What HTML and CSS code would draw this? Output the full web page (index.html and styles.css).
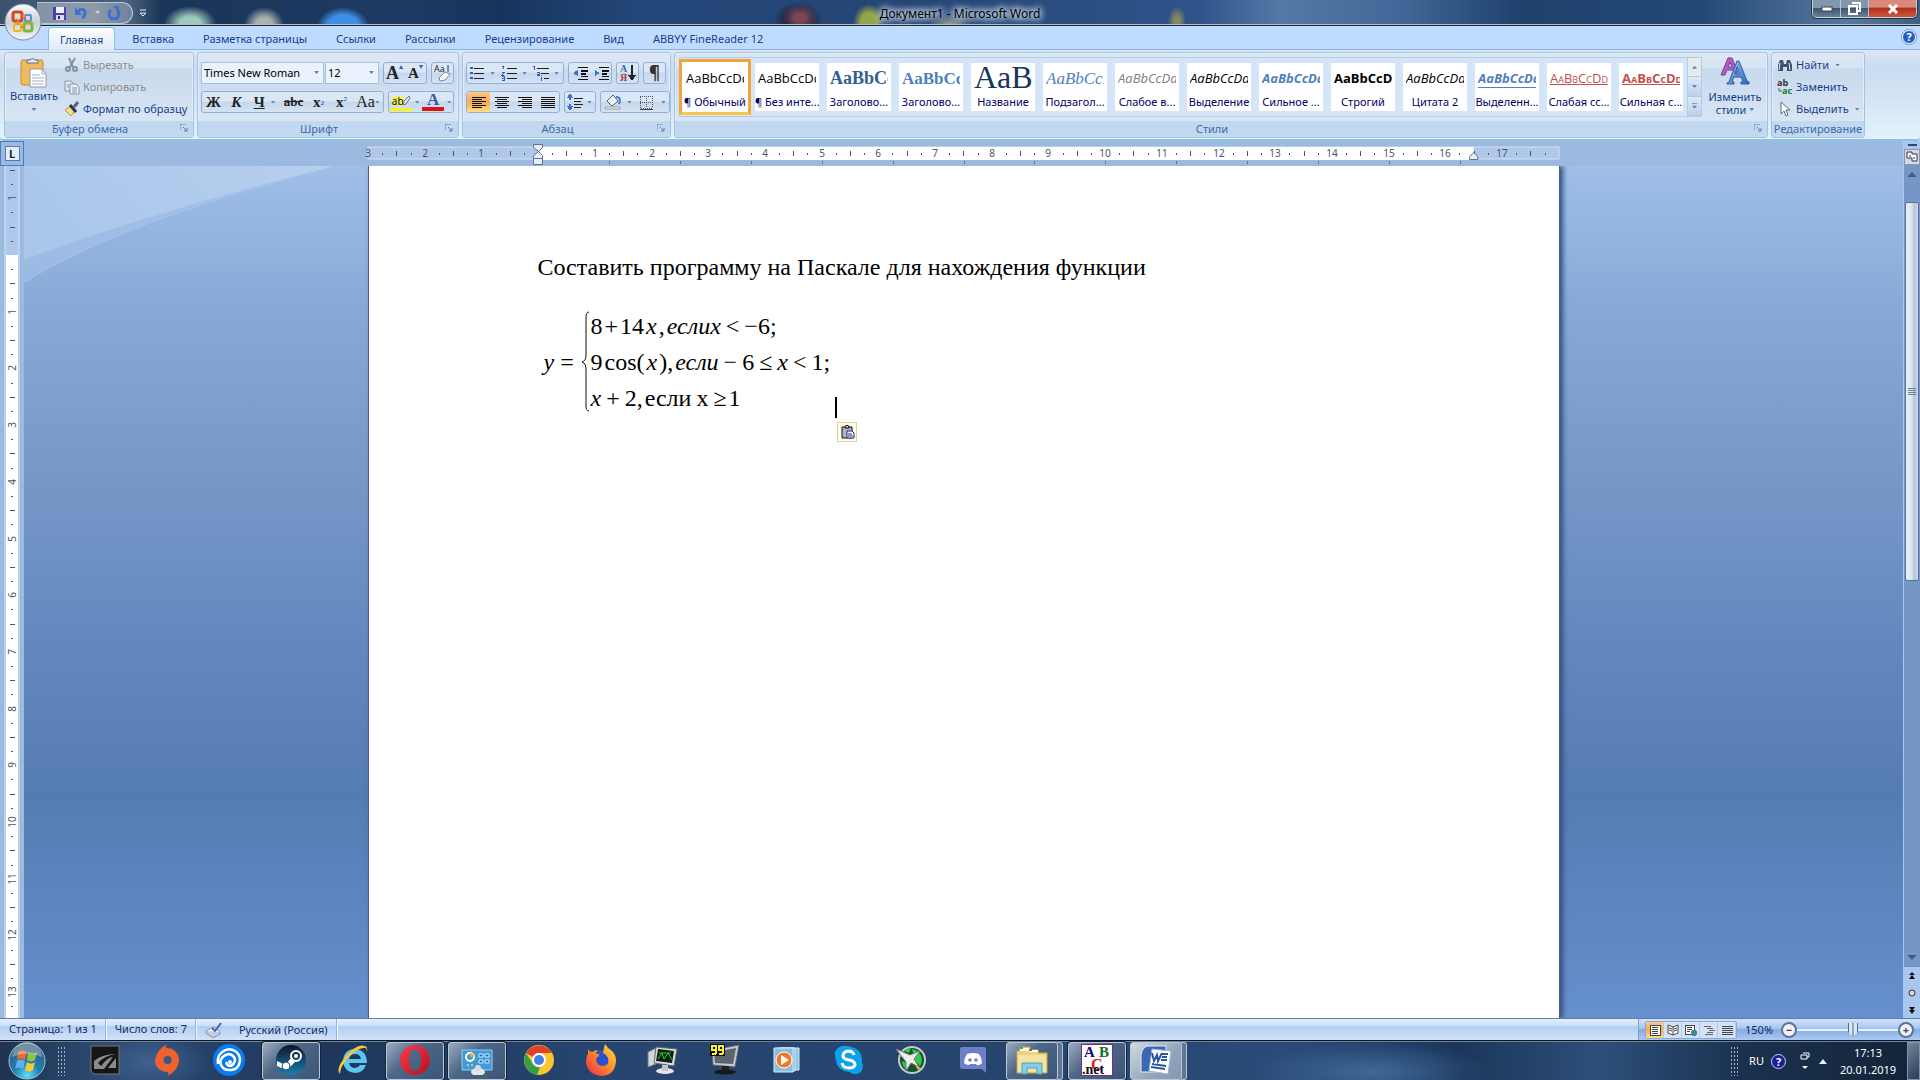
FILE: index.html
```html
<!DOCTYPE html>
<html lang="ru">
<head>
<meta charset="utf-8">
<title>Документ1 - Microsoft Word</title>
<link rel="stylesheet" href="styles.css">
</head>
<body>
<svg class="defs" aria-hidden="true">
  <defs>
    <linearGradient id="gSilver" x1="0" y1="0" x2="0" y2="1"><stop offset="0" stop-color="#fff"/><stop offset=".5" stop-color="#c9ced8"/><stop offset="1" stop-color="#f4f6fa"/></linearGradient>
    <linearGradient id="gA" x1="0" y1="0" x2="1" y2="1"><stop offset="0" stop-color="#9cc4f5"/><stop offset="1" stop-color="#2d67b8"/></linearGradient>
    <linearGradient id="gFox" x1="1" y1="0" x2="0" y2="1"><stop offset="0" stop-color="#ffe14a"/><stop offset=".45" stop-color="#ff9226"/><stop offset="1" stop-color="#e8264f"/></linearGradient>
    <radialGradient id="gOrb" cx=".5" cy=".9" r=".9"><stop offset="0" stop-color="#5fe0f5"/><stop offset=".4" stop-color="#1f7fb4"/><stop offset="1" stop-color="#3c5670"/></radialGradient>
    <linearGradient id="gSteam" x1="0" y1="0" x2="0" y2="1"><stop offset="0" stop-color="#10142b"/><stop offset="1" stop-color="#1a7fae"/></linearGradient>
    <linearGradient id="gOpera" x1="0" y1="0" x2="1" y2="1"><stop offset="0" stop-color="#ff3a4c"/><stop offset="1" stop-color="#b5101c"/></linearGradient>
    <linearGradient id="gSwoosh" x1="0" y1="0" x2="1" y2="0"><stop offset="0" stop-color="#acc8ec"/><stop offset="1" stop-color="#bdd3f0"/></linearGradient>
  </defs>
</svg>

<header class="titlebar">
  <button class="office" aria-label="Office">
    <svg width="38" height="38" viewBox="0 0 38 38"><circle cx="19" cy="19" r="18" fill="url(#gSilver)" stroke="#7b8797"/><g fill="none" stroke-width="3"><rect x="9" y="9" width="9" height="9" rx="2" stroke="#d3481d"/><rect x="21" y="12" width="6" height="6" rx="1" stroke="#4f93d6" stroke-width="2"/><rect x="10" y="21" width="7" height="7" rx="1" stroke="#f0b51c" stroke-width="2"/><rect x="20" y="20" width="8" height="8" rx="2" stroke="#82b53c"/><path d="M18 13h4M14 17v5M24 17v4M17 24h4" stroke="#e8842a" stroke-width="2"/></g></svg>
  </button>
  <div class="quick">
    <button aria-label="Сохранить"><svg width="14" height="14" viewBox="0 0 14 14"><path d="M0 1h13v13H1l-1-1z" fill="#4a41a8"/><path d="M3 1h8v6H3z" fill="#eef0fb"/><path d="M3 9h8v5H3z" fill="#d9dcf0"/><path d="M5 10h2v3H5z" fill="#332b86"/></svg></button>
    <button aria-label="Отменить"><svg width="14" height="14" viewBox="0 0 14 14"><path d="M3 6c4-4 8-3 8 1 0 2-1 4-3 5" fill="none" stroke="#3d6fd0" stroke-width="3"/><path d="M1 1v8h7z" fill="#3d6fd0"/></svg></button>
    <i class="arr light"></i>
    <button aria-label="Вернуть"><svg width="14" height="14" viewBox="0 0 14 14"><path d="M4 4a5 5 0 1 0 6 0" fill="none" stroke="#3d6fd0" stroke-width="3"/><path d="M6 0h6v6z" fill="#3d6fd0"/></svg></button>
  </div>
  <button class="quick-more" aria-label="Настройка панели"><svg width="8" height="8" viewBox="0 0 8 8"><path d="M1 1h6M1 4h6L4 7z" fill="none" stroke="#e6edf7"/></svg></button>
  <h1>Документ1 - Microsoft Word</h1>
  <div class="winbtns">
    <button aria-label="Свернуть"><svg width="12" height="6" viewBox="0 0 12 6"><rect x="1" y="1" width="10" height="4" fill="#fff" stroke="#3c4658"/></svg></button>
    <button aria-label="Восстановить"><svg width="13" height="13" viewBox="0 0 13 13"><path d="M4 1h8v8h-2M1 4h8v8H1z" fill="none" stroke="#fff" stroke-width="2"/></svg></button>
    <button class="close" aria-label="Закрыть"><svg width="12" height="10" viewBox="0 0 12 10"><path d="M2 1l8 8M10 1L2 9" stroke="#fff" stroke-width="3"/></svg></button>
  </div>
</header>

<nav class="tabs">
  <a class="active" href="#home">Главная</a><a href="#insert">Вставка</a><a href="#layout">Разметка страницы</a><a href="#refs">Ссылки</a><a href="#mail">Рассылки</a><a href="#review">Рецензирование</a><a href="#view">Вид</a><a href="#abbyy">ABBYY FineReader 12</a>
  <button class="help" aria-label="Справка">?</button>
</nav>

<section class="ribbon" id="home">
  <div class="group clip">
    <div class="tools">
      <button class="big"><svg width="28" height="31" viewBox="0 0 28 31"><rect x="1" y="3" width="22" height="25" rx="2" fill="#eebb5c" stroke="#c38d35"/><path d="M7 5V3h3a3 3 0 0 1 5 0h3v3H7z" fill="#e7e9ee" stroke="#666f80"/><path d="M10 12h12l4 5v13H10z" fill="#fff" stroke="#8a97ad"/><path d="M22 12v5h4M12 18h8M12 21h12M12 24h12M12 27h12" fill="none" stroke="#a3afc2"/></svg><span>Вставить</span><i class="arr"></i></button>
      <div class="list">
        <button class="off"><svg width="16" height="16" viewBox="0 0 16 16"><path d="M5 1l4 9M11 1L6 10" stroke="#8391a8" stroke-width="2"/><circle cx="4" cy="12" r="2" fill="none" stroke="#8391a8" stroke-width="2"/><circle cx="11" cy="12" r="2" fill="none" stroke="#8391a8" stroke-width="2"/></svg>Вырезать</button>
        <button class="off"><svg width="16" height="16" viewBox="0 0 16 16"><path d="M1 2h6l3 3v7H1z" fill="#dfe6f0" stroke="#8391a8"/><path d="M6 5h6l3 3v7H6z" fill="#eef2f8" stroke="#8391a8"/><path d="M8 9h5M8 11h5M8 13h5M3 6h2M3 8h2" stroke="#8391a8"/></svg>Копировать</button>
        <button><svg width="16" height="16" viewBox="0 0 16 16"><path d="M1 9l6-4 4 5-4 5z" fill="#f6e087" stroke="#b9973c"/><path d="M6 4l6 7" stroke="#2e3550" stroke-width="3"/><path d="M10 6l4-5" stroke="#59607a" stroke-width="3"/></svg>Формат по образцу</button>
      </div>
    </div>
    <h2>Буфер обмена<svg class="launch" width="8" height="8" viewBox="0 0 8 8"><path d="M0 6V0h6M3 3l4 4M7 4v3H4" fill="none" stroke="#5d7fae"/></svg></h2>
  </div>

  <div class="group font">
    <div class="rows">
      <div class="row">
        <div class="combos"><label class="combo wide"><select aria-label="Шрифт"><option>Times New Roman</option></select></label><label class="combo"><select aria-label="Размер"><option>12</option></select></label></div>
        <div class="bar"><button class="serif big-a" aria-label="Увеличить размер">A<sup>▴</sup></button><button class="serif" aria-label="Уменьшить размер">A<sup>▾</sup></button></div>
        <div class="bar"><button aria-label="Очистить формат"><svg width="18" height="18" viewBox="0 0 18 18"><text x="0" y="8" font-size="9" font-family="Open Sans" fill="#222">Aa</text><path d="M14 1v7" stroke="#333"/><path d="M5 14l6-6 5 2-5 6-5 1z" fill="#fff" stroke="#76839b"/></svg></button></div>
      </div>
      <div class="row">
        <div class="bar"><button class="serif">Ж</button><button class="serif ital">К</button><button class="serif under">Ч</button><i class="arr"></i><button class="serif strike">abc</button><button class="serif">x<sub>₂</sub></button><button class="serif">x<sub>²</sub></button><button class="serif aa">Aa<i class="arr"></i></button></div>
        <div class="bar"><button class="mark"><span>ab</span><svg class="pen" width="10" height="11" viewBox="0 0 10 11"><path d="M2 10l1-4 5-5 1 2-4 6z" fill="#dfe8f4" stroke="#5d718f"/></svg></button><i class="arr"></i><button class="serif color">A</button><i class="arr"></i></div>
      </div>
    </div>
    <h2>Шрифт<svg class="launch" width="8" height="8" viewBox="0 0 8 8"><path d="M0 6V0h6M3 3l4 4M7 4v3H4" fill="none" stroke="#5d7fae"/></svg></h2>
  </div>

  <div class="group para">
    <div class="rows">
      <div class="row">
        <div class="bar"><button aria-label="Маркеры"><svg width="16" height="16" viewBox="0 0 16 16"><path d="M5 3h10M5 8h10M5 13h10" stroke="#222"/><path d="M1 2h3v2H1zM1 7h3v2H1zM1 12h3v2H1z" fill="#2f5fb5"/></svg></button><i class="arr"></i><button aria-label="Нумерация"><svg width="16" height="16" viewBox="0 0 16 16"><path d="M6 3h10M6 8h10M6 13h10" stroke="#222"/><path d="M1 1h1v3M1 7h2v1l-2 2h2M1 11h2v4H1M1 13h2" fill="none" stroke="#2f5fb5"/></svg></button><i class="arr"></i><button aria-label="Многоуровневый список"><svg width="18" height="16" viewBox="0 0 18 16"><path d="M5 3h12M9 8h8M12 13h5" stroke="#222"/><path d="M1 1h1v4M5 7h2v3H5V9h2M9 12v4M9 10v1" fill="none" stroke="#2f5fb5"/></svg></button><i class="arr"></i></div>
        <div class="bar"><button aria-label="Уменьшить отступ"><svg width="16" height="16" viewBox="0 0 16 16"><path d="M6 2h10M9 5h7M9 8h5M9 11h7M6 14h10" stroke="#111"/><path d="M9 6h7M9 9h5" stroke="#111"/><path d="M6 5v6L1 8z" fill="#3b74cc"/></svg></button><button aria-label="Увеличить отступ"><svg width="16" height="16" viewBox="0 0 16 16"><path d="M6 2h10M9 5h7M9 8h5M9 11h7M6 14h10" stroke="#111"/><path d="M9 6h7M9 9h5" stroke="#111"/><path d="M2 5v6l5-3z" fill="#3b74cc"/></svg></button></div>
        <div class="bar"><button aria-label="Сортировка"><svg width="16" height="18" viewBox="0 0 16 18"><text x="0" y="8" font-size="10" font-weight="bold" font-family="Liberation Serif" fill="#3c66b4">А</text><text x="0" y="17" font-size="10" font-weight="bold" font-family="Liberation Serif" fill="#b43a3a">Я</text><path d="M12 1v13M9 11l3 4 3-4" fill="none" stroke="#222" stroke-width="2"/></svg></button></div>
        <div class="bar"><button class="pil">¶</button></div>
      </div>
      <div class="row">
        <div class="bar"><button class="on" aria-label="По левому краю"><svg width="16" height="14" viewBox="0 0 16 14"><path d="M1 2h14M1 4h10M1 6h14M1 8h10M1 10h14M1 12h10" stroke="#111"/></svg></button><button aria-label="По центру"><svg width="16" height="14" viewBox="0 0 16 14"><path d="M1 2h14M3 4h10M1 6h14M3 8h10M1 10h14M3 12h10" stroke="#111"/></svg></button><button aria-label="По правому краю"><svg width="16" height="14" viewBox="0 0 16 14"><path d="M1 2h14M5 4h10M1 6h14M5 8h10M1 10h14M5 12h10" stroke="#111"/></svg></button><button aria-label="По ширине"><svg width="16" height="14" viewBox="0 0 16 14"><path d="M1 2h14M1 4h14M1 6h14M1 8h14M1 10h14M1 12h14" stroke="#111"/></svg></button></div>
        <div class="bar"><button aria-label="Интервал"><svg width="16" height="16" viewBox="0 0 16 16"><path d="M7 4h9M7 7h7M7 10h9M7 13h7" stroke="#222"/><path d="M3 2v4M3 10v4M1 4l2-3 2 3M1 12l2 3 2-3" fill="none" stroke="#3b74cc" stroke-width="2"/></svg></button><i class="arr"></i></div>
        <div class="bar"><button aria-label="Заливка"><svg class="smooth" width="18" height="16" viewBox="0 0 18 16"><path d="M3 7l6-6 5 6-6 5z" fill="#f4f6fa" stroke="#4a5b78"/><path d="M12 3c4 0 5 3 3 7" fill="none" stroke="#4379c4" stroke-width="2"/><path d="M1 13h15v2H1z" fill="#fff" stroke="#999"/></svg></button><i class="arr"></i><button aria-label="Границы"><svg width="15" height="15" viewBox="0 0 15 15"><path d="M1 1h12v12H1zM7 1v12M1 7h12" fill="none" stroke="#556" stroke-dasharray="1 1"/><path d="M1 14h13" stroke="#444"/></svg></button><i class="arr"></i></div>
      </div>
    </div>
    <h2>Абзац<svg class="launch" width="8" height="8" viewBox="0 0 8 8"><path d="M0 6V0h6M3 3l4 4M7 4v3H4" fill="none" stroke="#5d7fae"/></svg></h2>
  </div>

  <div class="group styles">
    <div class="tools">
      <div class="gallery">
        <button class="tile sel"><b class="s-norm">AaBbCcDd</b><span>¶ Обычный</span></button>
        <button class="tile"><b class="s-norm">AaBbCcDd</b><span>¶ Без инте...</span></button>
        <button class="tile"><b class="s-h1">AaBbCc</b><span>Заголово...</span></button>
        <button class="tile"><b class="s-h2">AaBbCc</b><span>Заголово...</span></button>
        <button class="tile"><b class="s-title">AaB</b><span>Название</span></button>
        <button class="tile"><b class="s-sub">AaBbCc.</b><span>Подзагол...</span></button>
        <button class="tile"><b class="s-weak">AaBbCcDd</b><span>Слабое в...</span></button>
        <button class="tile"><b class="s-em">AaBbCcDd</b><span>Выделение</span></button>
        <button class="tile"><b class="s-strong-em">AaBbCcDd</b><span>Сильное ...</span></button>
        <button class="tile"><b class="s-strong">AaBbCcDd</b><span>Строгий</span></button>
        <button class="tile"><b class="s-em">AaBbCcDd</b><span>Цитата 2</span></button>
        <button class="tile"><b class="s-quote">AaBbCcDd</b><span>Выделенн...</span></button>
        <button class="tile"><b class="s-ref">AaBbCcDd</b><span>Слабая сс...</span></button>
        <button class="tile"><b class="s-ref bold">AaBbCcDd</b><span>Сильная с...</span></button>
        <div class="gscroll"><button class="off" aria-label="Вверх"><i class="arr up"></i></button><button aria-label="Вниз"><i class="arr"></i></button><button aria-label="Ещё"><i class="arr more"></i></button></div>
      </div>
      <button class="big change"><svg width="30" height="30" viewBox="0 0 30 30"><path fill-rule="evenodd" d="M1 18L8 1h4l6 15h-4l-1-3H7l-2 5zM8 10h4L10 5z" fill="#b35cc0" stroke="#7d3c92"/><path fill-rule="evenodd" d="M7 27v-1l2-1L17 4h2l8 20 2 1v2h-8v-2l2-1-2-4h-7l-2 4 2 1v2zM15 17h5l-3-7z" fill="url(#gA)" stroke="#2c5da6"/></svg><span>Изменить<br>стили <i class="arr"></i></span></button>
    </div>
    <h2>Стили<svg class="launch" width="8" height="8" viewBox="0 0 8 8"><path d="M0 6V0h6M3 3l4 4M7 4v3H4" fill="none" stroke="#5d7fae"/></svg></h2>
  </div>

  <div class="group edit">
    <div class="list">
      <button><svg width="16" height="14" viewBox="0 0 16 14"><path d="M1 13V7l2-5h3l1 4h2l1-4h3l2 5v6h-5V9H6v4z" fill="#3d5273"/><path d="M3 5l-1 7M12 5l1 7M4 1h2M10 1h2" stroke="#e8eef8"/></svg>Найти<i class="arr"></i></button>
      <button><svg width="16" height="16" viewBox="0 0 16 16"><text x="0" y="7" font-size="9" font-weight="bold" font-family="Open Sans" fill="#333">ab</text><text x="5" y="15" font-size="9" font-weight="bold" font-family="Open Sans" fill="#16802a">ac</text><path d="M2 9v3h3" fill="none" stroke="#3660a0"/></svg>Заменить</button>
      <button><svg width="16" height="16" viewBox="0 0 16 16"><path d="M4 1v12l3-3 2 5 2-1-2-5h4z" fill="#fff" stroke="#5b6b85"/></svg>Выделить<i class="arr"></i></button>
    </div>
    <h2>Редактирование</h2>
  </div>
</section>

<main class="work">
  <div class="corner"><button aria-label="Табуляция">L</button></div>
  <div class="hruler"><svg id="hruler" width="1192" height="24" role="img" aria-label="Линейка"></svg></div>
  <div class="vruler"><svg id="vruler" width="24" height="852" role="img" aria-label="Линейка"></svg></div>
  <div class="canvas">
    <svg class="swoosh" width="320" height="120" viewBox="0 0 320 120"><path d="M0 0h310C200 28 90 62 0 116z" fill="#b4cdef" opacity=".35"/><path d="M0 0h310C200 28 100 56 0 94z" fill="url(#gSwoosh)" opacity=".75"/><path d="M310 0C200 30 90 62 0 116" fill="none" stroke="#a9c5ea"/></svg>
    <article class="page">
      <p>Составить программу на Паскале для нахождения функции</p>
      <div class="formula">
        <span class="lhs"><i>y</i> =</span>
        <svg width="8" height="101" viewBox="0 0 8 101"><path d="M7 1Q4 1 4 6V44Q4 50 0 51Q4 52 4 57V95Q4 100 7 100" fill="none" stroke="#111"/></svg>
        <div class="cases">
          <div><span>8</span><span>+</span><span>14</span><i>x</i><span>,</span><i>еслих</i><span class="op">&lt;</span><span>−6;</span></div>
          <div><span>9</span><span>cos(</span><i>x</i><span>),</span><i>если</i><span class="op">−</span><span>6</span><span class="op">≤</span><i>x</i><span class="op">&lt;</span><span>1;</span></div>
          <div><i>x</i><span class="op">+</span><span>2,</span><span>если</span><span class="op">x</span><span>≥</span><span>1</span></div>
        </div>
        <div class="caret"><button aria-label="Параметры вставки"><svg width="14" height="16" viewBox="0 0 14 16"><path d="M1 3h10v11H1z" fill="#aeb4bd" stroke="#111"/><path d="M4 4V2h1l1-1 1 1h1v2z" fill="#f3d873" stroke="#111"/><path d="M6 7h5l2 2v5H6z" fill="#fff" stroke="#1b2a8c"/><path d="M7 10h4M7 12h5" stroke="#1b2a8c"/></svg></button></div>
      </div>
    </article>
  </div>
  <div class="scroll">
    <i class="split"></i>
    <button class="rulerbtn" aria-label="Линейка"><svg width="12" height="12" viewBox="0 0 12 12"><path d="M1 1h5v2h5v7H6V7H1z" fill="#fff" stroke="#334"/><path d="M3 5h2M8 6v2" stroke="#334"/></svg></button>
    <div class="track"><i class="arr up"></i><div class="thumb"><i></i></div><div class="rest"><i class="arr"></i></div></div>
    <button aria-label="Предыдущая"><svg width="8" height="8" viewBox="0 0 8 8"><path d="M4 0l3 3H1zM4 3l3 4H1z" fill="#111"/></svg></button>
    <button aria-label="Объект"><svg width="8" height="8" viewBox="0 0 8 8"><circle cx="4" cy="4" r="3" fill="#d8d8d8" stroke="#333"/></svg></button>
    <button aria-label="Следующая"><svg width="8" height="8" viewBox="0 0 8 8"><path d="M1 1h6L4 5zM1 4h6L4 8z" fill="#111"/></svg></button>
  </div>
</main>

<footer class="status">
  <span>Страница: 1 из 1</span><span>Число слов: 7</span>
  <span class="lang"><svg width="18" height="16" viewBox="0 0 18 16"><path d="M1 9l8-4 6 5-7 4z" fill="#fff" stroke="#8090ac"/><path d="M1 9v2l7 5 7-4v-2" fill="#c2cee2" stroke="#8090ac"/><path d="M7 6l3 3 6-8" fill="none" stroke="#3f66b4" stroke-width="2"/></svg>Русский (Россия)</span>
  <div class="view">
    <div class="modes">
      <button class="on" aria-label="Разметка"><svg width="12" height="12" viewBox="0 0 12 12"><path d="M1 1h10v10H1z" fill="#fff" stroke="#444"/><path d="M3 3h6M3 5h6M3 7h6M3 9h6" stroke="#444"/></svg></button>
      <button aria-label="Чтение"><svg class="smooth" width="12" height="12" viewBox="0 0 12 12"><path d="M1 1l5 2 5-2v8l-5 2-5-2zM6 3v8M2 4l3 1M2 6l3 1M7 5l3-1M7 7l3-1" fill="#fff" stroke="#444"/></svg></button>
      <button aria-label="Веб"><svg width="13" height="13" viewBox="0 0 13 13"><path d="M1 1h9v9H1z" fill="#fff" stroke="#444"/><path d="M3 3h5M3 5h5M3 7h3" stroke="#444"/><circle cx="10" cy="9" r="3" fill="#3a8a9c"/></svg></button>
      <button aria-label="Структура"><svg width="12" height="12" viewBox="0 0 12 12"><path d="M1 2h7M4 4h6M6 6h6M4 8h6M2 10h8" stroke="#666"/></svg></button>
      <button aria-label="Черновик"><svg width="12" height="12" viewBox="0 0 12 12"><path d="M1 2h11M1 4h11M1 6h11M1 8h11M1 10h11" stroke="#444"/></svg></button>
    </div>
    <span class="pct">150%</span>
    <button class="round" aria-label="Уменьшить">−</button>
    <input type="range" min="0" max="100" value="56" aria-label="Масштаб">
    <button class="round" aria-label="Увеличить">+</button>
  </div>
</footer>

<div class="taskbar">
  <button class="start" aria-label="Пуск"><svg width="38" height="38" viewBox="0 0 38 38"><circle cx="19" cy="19" r="18" fill="url(#gOrb)" stroke="#9fc2d8"/><path d="M10 10c3-2 6-2 9 0l-2 8c-3-2-5-2-8 0z" fill="#ee6a34"/><path d="M20 10c3 2 6 2 9 0l-2 8c-3 2-5 2-8 0z" fill="#8fc63f"/><path d="M9 19c3-2 5-2 8 0l-2 8c-3-2-5-2-8 0z" fill="#5cb2ef"/><path d="M19 20c3 2 5 2 8 0l-2 8c-3 2-5 2-8 0z" fill="#fbc92f"/><path d="M4 15a15 15 0 0 1 30 0Q19 8 4 15" fill="#fff" opacity=".3"/></svg></button>
  <i class="grip"></i>
  <div class="apps">
    <button aria-label="GeForce"><svg width="30" height="30" viewBox="0 0 30 30"><path d="M1 1h28v28H4l-3-3z" fill="#161616" stroke="#777"/><path d="M4 22V16q8-7 22-7-12 2-18 9l3 3q7-9 12-9l-9 12H4zM18 23l8-10v10z" fill="#8b8b8b"/></svg></button>
    <button aria-label="Origin"><svg width="30" height="32" viewBox="0 0 30 32"><path fill-rule="evenodd" d="M15 0q-2 3-1 4A12 12 0 0 1 27 16q0 9-11 16 1-2 0-4A12 12 0 0 1 3 17Q4 6 15 0zM15 12a4 4 0 1 0 1 8 4 4 0 0 0-1-8z" fill="#f0622d"/></svg></button>
    <button aria-label="Uplay"><svg width="32" height="32" viewBox="0 0 32 32"><circle cx="16" cy="16" r="16" fill="#0a7cf0"/><g fill="none" stroke="#fff" stroke-width="2.5"><path d="M5 20C3 9 14 2 22 7s6 18-4 19-14-9-7-14 13 2 10 7-9 2-7-1"/></g><circle cx="17" cy="18" r="2" fill="#fff"/></svg></button>
    <button class="run" aria-label="Steam"><svg width="30" height="30" viewBox="0 0 30 30"><circle cx="15" cy="15" r="15" fill="url(#gSteam)"/><circle cx="20" cy="11" r="5" fill="none" stroke="#fff" stroke-width="2"/><circle cx="20" cy="11" r="2" fill="#fff"/><path d="M1 16l8 4 7-8 3 5-6 6-3 2-9-4z" fill="#fff"/><circle cx="10" cy="21" r="4" fill="#fff" stroke="#164e74"/></svg></button>
    <button aria-label="Internet Explorer"><svg width="32" height="32" viewBox="0 0 32 32"><path fill-rule="evenodd" d="M30 19H12q1 5 6 5 3 0 5-3h6q-3 8-11 8-11-1-12-12Q7 5 18 5q12 1 12 14zM12 15h12q-1-5-6-5t-6 5z" fill="#5cc5f2"/><path d="M3 30Q-2 25 9 12T28 2q3 1 2 6 0-5-4-4Q19 5 11 14T3 30z" fill="#f5cb32"/></svg></button>
    <button class="run" aria-label="Opera"><svg width="32" height="30" viewBox="0 0 32 30"><path fill-rule="evenodd" d="M16 0a15 15 0 1 0 0 30 15 15 0 0 0 0-30zM16 4c4 0 6 5 6 11s-2 11-6 11-6-5-6-11 2-11 6-11z" fill="url(#gOpera)"/></svg></button>
    <button class="run" aria-label="Панель управления"><svg width="32" height="30" viewBox="0 0 32 30"><path d="M1 5h30v20H1z" fill="#3f9ad8" stroke="#8fd0f2"/><circle cx="9" cy="12" r="4" fill="none" stroke="#fff" stroke-width="2"/><path d="M9 8v4h4a4 4 0 0 0-4-4" fill="#f6a22b"/><path d="M18 9h4v3h-4zM24 9h4v3h-4zM18 15h4v3h-4zM24 15h4v3h-4z" fill="#1c6db2" stroke="#d7effc"/><circle cx="7" cy="20" r="1" fill="#fc9"/><circle cx="11" cy="20" r="1" fill="#fc9"/><ellipse cx="17" cy="27" rx="7" ry="4" fill="#e4e7ea"/><circle cx="17" cy="23" r="3" fill="#d8dce0"/></svg></button>
    <button aria-label="Chrome"><svg width="30" height="30" viewBox="0 0 30 30"><circle cx="15" cy="15" r="15" fill="#fbc52f"/><path d="M2 8A15 15 0 0 1 28 8H15a7 7 0 0 0-6 4z" fill="#e0412f"/><path d="M2 8l7 11a7 7 0 0 0 7 3l-3 8A15 15 0 0 1 2 8" fill="#34a046"/><circle cx="15" cy="15" r="7" fill="#fff"/><circle cx="15" cy="15" r="5" fill="#4280ec"/></svg></button>
    <button aria-label="Firefox"><svg width="32" height="32" viewBox="0 0 32 32"><circle cx="16" cy="16" r="10" fill="#2a52c8"/><path d="M3 5q2 3 4 3 3-2 6-2-2 2-2 4h3q1 2-3 4 0 8 7 8 7-1 5-8-2-4-5-5 1-6 2-9 3 5 7 7 4 4 4 10-1 14-14 15Q3 31 1 19 1 12 3 10z" fill="url(#gFox)"/></svg></button>
    <button aria-label="Монитор"><svg width="32" height="30" viewBox="0 0 32 30"><path d="M1 7l8-4v16l-8 3z" fill="#d4d7da" stroke="#777"/><path d="M9 2l21 2-3 17-20-3z" fill="#d9dcdf" stroke="#666"/><path d="M11 4l16 2-2 12-16-2z" fill="#0b2310"/><path d="M11 14l4-6 2 6 4-6 4 7M12 8h12" fill="none" stroke="#35c43f"/><ellipse cx="18" cy="26" rx="9" ry="3" fill="#e3e5e7"/><path d="M15 20h6v6h-6z" fill="#c2c6ca"/></svg></button>
    <button aria-label="Fraps"><svg width="32" height="32" viewBox="0 0 32 32"><path d="M3 6l27-5-4 22-22-2z" fill="#c5c9cd" stroke="#666"/><path d="M5 8l22-4-3 16-18-1z" fill="#5c646d"/><path d="M13 22h7v4h-7z" fill="#222"/><ellipse cx="16" cy="28" rx="11" ry="2.500" fill="#16181a"/><path d="M1 0h15v12H1z" fill="#111"/><path d="M7 10V2H3v4h4M3 10h4M14 10V2h-4v4h4M10 10h4" fill="none" stroke="#f8f03a" stroke-width="2"/></svg></button>
    <button aria-label="Media Player"><svg width="28" height="28" viewBox="0 0 28 28"><path d="M8 2h18v22H8z" fill="#8fc4e6" stroke="#d8ecf8"/><path d="M4 2h18v23H4z" fill="#6dafdd" stroke="#d8ecf8"/><path d="M1 2h19v24H1z" fill="#8abde0" stroke="#d8ecf8"/><circle cx="11" cy="14" r="8" fill="#f07a24" stroke="#fff"/><path d="M8 9v10l8-5z" fill="#fff"/></svg></button>
    <button aria-label="Skype"><svg width="30" height="30" viewBox="0 0 30 30"><path d="M8 1q5-1 9 1 11 2 11 13-1 3 1 5 0 9-8 9-4 0-5-2Q3 26 2 15-2 4 8 1z" fill="#0aa2ea"/><path d="M20 10q-1-4-6-4-5 1-5 5 0 3 6 4t6 5q-1 3-6 3-6 0-7-5" fill="none" stroke="#fff" stroke-width="3"/></svg></button>
    <button aria-label="Afterburner"><svg width="32" height="30" viewBox="0 0 32 30"><circle cx="17" cy="15" r="13" fill="#135428" stroke="#c4cacb" stroke-width="2"/><path d="M17 4a11 11 0 0 1 8 17l-5-5zM7 16l5 2-1 6q-4-3-4-8zM9 6q3-3 7-3l-2 5z" fill="#2fc94e"/><path d="M1 4l14 6 10-4-6 8 5 8-8-4-5 8v-9z" fill="#eceeee" stroke="#777"/><path d="M20 20l6 3-3 2z" fill="#f4b13a"/></svg></button>
    <button aria-label="Discord"><svg width="28" height="28" viewBox="0 0 28 28"><path d="M3 1h22q2 0 2 2v24l-4-4H3q-2 0-2-2V3q0-2 2-2z" fill="#6d7fc9"/><path d="M8 8q6-2 12 0 3 4 3 9-3 3-5 2l-1-1H11l-1 1q-3 0-5-2 0-5 3-9z" fill="#fff"/><circle cx="11" cy="14" r="1.800" fill="#6d7fc9"/><circle cx="17" cy="14" r="1.800" fill="#6d7fc9"/></svg></button>
    <button class="run stack" aria-label="Проводник"><svg width="34" height="30" viewBox="0 0 34 30"><path d="M2 6h3V2h10v3h8v3h9v20H2z" fill="#ecd67c" stroke="#c9ac4a"/><path d="M5 3h9v3H5zM14 5h9v2h-9z" fill="#fff"/><path d="M5 2h3v2H5z" fill="#3a3"/><path d="M14 4h3v2h-3z" fill="#c43"/><path d="M3 10h28v17H3z" fill="#f4e49d"/><path d="M7 29V18h20v11h-5v-6H12v6z" fill="#86cdea" stroke="#4f9fc8"/></svg></button>
    <button class="run" aria-label="PascalABC.NET"><svg width="32" height="32" viewBox="0 0 32 32"><path d="M0 0h32v32H0z" fill="#fff" stroke="#7a2a8a" stroke-width="2"/><g font-family="Liberation Serif" font-weight="bold"><text x="3" y="13" font-size="15" fill="#10107a">A</text><text x="18" y="13" font-size="15" fill="#0f7420">B</text><text x="10" y="26" font-size="16" fill="#e01818">C</text><text x="1" y="30" font-size="14" fill="#111">.net</text></g></svg></button>
    <button class="run active stack" aria-label="Word"><svg width="32" height="30" viewBox="0 0 32 30"><path d="M8 1h18v26H1V10q1-8 7-9z" fill="#3c68b2" stroke="#e2ebf8"/><path d="M12 4l19 2-3 23-19-3z" fill="#fff" stroke="#9db4d8"/><path d="M12 8l2 8 3-6 1 6 4-8M22 9h6M22 12h5M21 15h6M12 19l14 2M11 22l14 2" fill="none" stroke="#2b559f" stroke-width="2"/></svg></button>
  </div>
  <div class="tray">
    <i class="grip"></i><span class="ru">RU</span>
    <span class="q">?</span>
    <svg width="10" height="18" viewBox="0 0 10 18"><path d="M3 1h6v4H7M1 3h6v4H1z" fill="none" stroke="#fff"/><path d="M2 14h6l-3 3z" fill="#fff"/></svg>
    <svg width="8" height="5" viewBox="0 0 8 5"><path d="M0 5h8L4 0z" fill="#e8eef6"/></svg>
    <time>17:13<br>20.01.2019</time>
    <button class="desk" aria-label="Рабочий стол"></button>
  </div>
</div>
<script src="rulers.js"></script>
</body>
</html>
```

FILE: styles.css
```css
* { box-sizing: border-box; }
body {
  margin: 0; height: 100vh; display: flex; flex-direction: column; overflow: hidden;
  font: 11px/16px "Noto Sans", "Open Sans", sans-serif; color: #15428b; background: #bfdbff;
}
button { border: 0; padding: 0; margin: 0; background: none; font: inherit; color: inherit; display: inline-flex; align-items: center; justify-content: center; }
svg { display: block; flex: none; }
.defs { position: absolute; width: 0; height: 0; }
.arr { flex: none; display: inline-block; width: 5px; height: 3px; background: #5f83b8; clip-path: polygon(0 0, 100% 0, 50% 100%); }
.arr.up { clip-path: polygon(0 100%, 100% 100%, 50% 0); }
.arr.light { background: #c6d6ee; }

.titlebar {
  position: relative; flex: none; height: 26px; display: flex; align-items: center; border-bottom: 1px solid #16263a;
  box-shadow: inset 0 -1px #b9c0bd;
  background:
    radial-gradient(ellipse 26px 18px at 190px 24px, #9fc9bd 40%, transparent),
    radial-gradient(ellipse 20px 18px at 264px 25px, #a9b5ac 40%, transparent),
    radial-gradient(ellipse 26px 20px at 343px 27px, #3f8fe6 60%, transparent),
    radial-gradient(ellipse 18px 14px at 800px 18px, #7c4658 30%, transparent),
    radial-gradient(ellipse 24px 18px at 798px 20px, #1c2438 50%, transparent),
    radial-gradient(ellipse 16px 18px at 869px 22px, #94a44a 50%, transparent),
    radial-gradient(ellipse 22px 12px at 950px 26px, #8c9c84 20%, transparent),
    radial-gradient(ellipse 9px 16px at 1177px 22px, #86895f 30%, transparent),
    linear-gradient(90deg, #3c526e 0, #4a627f 130px, #1b3558 160px, #1d3a62 400px, #16345c 500px, #24487a 640px, #254575 900px, #2f548a 1200px, #5479a8 1280px, #416898 1400px, #1f416e 1520px, #244977 1700px, #56799f 1850px, #41607f);
}
.office { position: absolute; left: 4px; top: 3px; z-index: 2; }
.quick { margin-left: 37px; width: 96px; height: 22px; padding-left: 16px; display: flex; align-items: center; gap: 7px; border: 1px solid #b9c6d6; border-left: 0; border-radius: 0 11px 11px 0; background: linear-gradient(90deg, #8593a8, #8e9ba6 60%, #6f819b); }
.quick-more { margin-left: 6px; width: 8px; }
.titlebar h1 { position: absolute; left: 0; right: 0; top: 6px; margin: 0; text-align: center; font-size: 12px; font-weight: 400; color: #000; text-shadow: 0 0 6px #dfe8f4, 0 0 8px #c9d6e8, 0 0 10px #c9d6e8, 0 0 6px #dfe8f4; }
.winbtns { margin: 0 3px 0 auto; align-self: flex-start; z-index: 1; display: flex; height: 18px; border: 1px solid #c3cfdd; border-top: 0; border-radius: 0 0 5px 5px; overflow: hidden; box-shadow: 0 0 0 1px #22344c; }
.winbtns button { width: 28px; border-right: 1px solid #b9c5d4; background: linear-gradient(#8496ac 45%, #3f566f 50%, #6a8097); }
.winbtns .close { width: 47px; border: 0; background: linear-gradient(#d98a7a 40%, #b2301c 50%, #d0583a); }

.tabs { flex: none; height: 24px; padding-left: 48px; display: flex; align-items: flex-end; background: #bfdbff; border-bottom: 1px solid #8db2e3; position: relative; }
.tabs a { height: 22px; padding: 4px 15px 0; margin-right: -1px; color: #15428b; text-decoration: none; white-space: nowrap; }
.tabs .active { margin: 0 2px -1px 0; height: 23px; padding: 4px 11px 0; background: linear-gradient(#fdfeff, #dfe9f6); border: 1px solid #7fc4ea; border-bottom: 0; border-radius: 4px 4px 0 0; }
.help { margin: 0 4px 5px auto; width: 14px; height: 14px; border-radius: 50%; background: #2560c8; border: 1px solid #fff; outline: 1px solid #7a9ccc; color: #fff; font-weight: 700; font-size: 11px; }

.ribbon { flex: none; height: 91px; padding: 2px 55px 1px 4px; display: flex; gap: 3px; background: linear-gradient(#dbe7f6, #c9dcf1 20%, #d5e4f4 55%, #e3f3fd); border-bottom: 2px solid #8cc4e6; border-radius: 0 0 4px 4px; }
.group { display: flex; flex-direction: column; border: 1px solid #a5c3e0; border-radius: 3px; box-shadow: 0 0 0 1px #e4eefa inset; background: linear-gradient(#dde8f5 0, #d5e3f2 15px, #c8d9ed 16px, #d8e5f4 68px); overflow: hidden; }
.group h2 { margin: auto 0 0; height: 16px; flex: none; position: relative; font-size: 11px; line-height: 16px; font-weight: 400; text-align: center; color: #3e6aaa; background: #c1d8f0; white-space: nowrap; }
.clip h2, .font h2, .para h2, .styles h2 { padding-right: 18px; }
.launch { position: absolute; right: 5px; top: 3px; }
.clip { width: 190px; }
.font { width: 262px; }
.para { width: 209px; }
.styles { flex: 1; min-width: 0; }
.edit { width: 94px; }
.tools { display: flex; }
.big { flex: none; flex-direction: column; justify-content: flex-start; width: 58px; padding-top: 4px; white-space: nowrap; }
.big .arr { margin-top: 4px; }
.list { display: flex; flex-direction: column; align-items: flex-start; padding: 1px 0 0 1px; }
.list button { height: 22px; gap: 3px; white-space: nowrap; }
.list .off { color: #8d8d8d; }
.edit .list { padding-left: 5px; }
.edit .arr { margin-left: 3px; }

.rows { display: flex; flex-direction: column; gap: 7px; padding: 9px 0 0 3px; }
.row { display: flex; gap: 4px; }
.combos { display: flex; gap: 1px; }
.combo { position: relative; width: 54px; height: 22px; }
.combo.wide { width: 123px; }
.combo select { appearance: none; width: 100%; height: 22px; border: 1px solid #abc1de; border-radius: 0; background: #eaf2fb; font: inherit; color: #000; padding: 0 2px; }
.combo::after { content: ""; position: absolute; right: 5px; top: 9px; width: 5px; height: 3px; background: #5f83b8; clip-path: polygon(0 0, 100% 0, 50% 100%); }
.bar { height: 22px; display: flex; align-items: center; border: 1px solid #8fb0d8; border-radius: 3px; background: linear-gradient(#dce7f5 45%, #c5d7ed 50%, #d5e3f3); overflow: hidden; }
.para .bar svg, .modes svg { shape-rendering: crispEdges; }
.para .bar .smooth, .modes .smooth { shape-rendering: auto; }
.bar button { height: 20px; width: 23px; position: relative; }
.font .row .bar:last-child button { width: 22px; }
.font .row:first-child .bar button { width: 21px; }
.font .row:last-child .bar:first-child { width: 183px; }
.font .row:last-child .bar:last-child { width: 66px; justify-content: space-around; }
.serif { font-family: "Liberation Serif", serif; font-size: 15px; font-weight: 700; color: #222; }
.serif.big-a { font-size: 18px; }
.serif sup { font: 8px/8px "DejaVu Sans", sans-serif; color: #2f5fb5; align-self: flex-start; }
.serif sub { font: 10px/10px "DejaVu Sans", sans-serif; color: #2f5fb5; }
.bar .ital { font-style: italic; }
.bar .under { text-decoration: underline; }
.bar .strike { text-decoration: line-through; font-size: 13px; width: 28px; margin-left: 4px; }
.bar .aa { width: 30px; margin-left: auto; font-weight: 400; font-size: 16px; }
.mark { font-size: 10px; color: #111; }
.mark span { background: #f4ef6a; line-height: 10px; align-self: flex-start; margin-top: 2px; }
.mark { border-bottom: 3px solid #f8f410; }
.mark .pen { margin-left: -3px; }
.bar .mark { width: 16px; height: 17px; border-bottom: 3px solid #f8f410; }
.bar .color { width: 16px; height: 17px; font-size: 17px; line-height: 14px; color: #2e5ca8; border-bottom: 4px solid #e01212; }
.para .arr { margin: 0 3px; }
.para .row:first-child .bar:first-child { width: 98px; }
.para .row:first-child .bar:first-child .arr { margin: 0 4px 0 3px; }
.para .row:first-child .bar:first-child button { width: 21px; }
.para .row:first-child .bar:nth-child(2) button { width: 21px; }
.para .row:first-child .bar:nth-child(n+3) button { width: 21px; }
.para .row:last-child .bar:nth-child(2) button { width: 19px; }
.bar .on, .modes .on { background: linear-gradient(#fbc98c, #f9a84f 50%, #fee08a); }
.pil { font-size: 17px; font-weight: 700; color: #333; }

.gallery { display: flex; flex: 1; min-width: 0; height: 60px; margin: 4px 3px 0 4px; border: 1px solid #b3cbe6; border-left: 0; background: #d4e5f7; }
.tile { flex: none; width: 72px; height: 56px; margin-top: 1px; border: 4px solid transparent; flex-direction: column; justify-content: flex-end; background: #fff; background-clip: padding-box; color: #000066; overflow: hidden; white-space: nowrap; }
.tile b { width: 58px; height: 29px; line-height: 29px; overflow: hidden; text-align: left; font-weight: 400; color: #000; }
.tile span { line-height: 18px; max-width: 64px; }
.tile.sel { border: 3px solid #efa53a; border-bottom-color: #f5c84c; padding: 1px; }
.s-norm, .s-weak, .s-em, .s-strong-em, .s-strong, .s-quote, .s-ref { font-family: "Open Sans", sans-serif; font-size: 13px; }
.tile .s-h1 { font: 700 18px/29px "Liberation Serif", serif; color: #365f91; }
.tile .s-h2 { font: 700 17px/29px "Liberation Serif", serif; color: #4f81bd; }
.tile .s-title { font: 32px/26px "Liberation Serif", serif; color: #17365d; }
.tile .s-sub { font: italic 17px/29px "Liberation Serif", serif; color: #4f81bd; }
.tile .s-weak { font-style: italic; color: #808080; }
.tile .s-em { font-style: italic; }
.tile .s-strong-em { font-style: italic; font-weight: 700; color: #4f81bd; }
.tile .s-strong { font-weight: 700; }
.tile .s-quote { font-style: italic; font-weight: 700; color: #4f81bd; text-decoration: underline; text-underline-offset: 4px; }
.tile .s-ref { font-variant: small-caps; color: #c0504d; text-decoration: underline; }
.tile .bold { font-weight: 700; }
.gscroll { width: 14px; margin-left: auto; display: flex; flex-direction: column; border-left: 1px solid #b3cbe6; }
.gscroll button { flex: 1; background: linear-gradient(#dce8f6, #bcd2ec); border-bottom: 1px solid #b3cbe6; }
.gscroll .off { background: #e6e9ee; }
.gscroll .more { height: 6px; clip-path: polygon(0 0, 100% 0, 100% 1px, 0 1px, 0 3px, 100% 3px, 50% 100%, 0 3px); }
.change { width: 60px; line-height: 13px; margin-right: 2px; }
.change span { margin-top: 3px; }
.change .arr { margin: 0 0 3px; }

.work { flex: 1; min-height: 0; display: grid; grid-template-columns: 24px 1fr 17px; grid-template-rows: 25px 1fr; background: #9cb9e0; }
.corner { display: flex; border: 1px solid #4d7cc0; }
.corner button { margin: auto; width: 15px; height: 15px; border: 1px solid #4d7cc0; background: #e4eefb; font-size: 11px; font-weight: 700; line-height: 10px; color: #123; }
.hruler { display: flex; justify-content: center; overflow: hidden; }
.hruler svg { overflow: visible; }
.vruler { grid-row: 2; overflow: hidden; }
.canvas { grid-area: 2 / 2; position: relative; display: flex; justify-content: center; overflow: hidden; background: linear-gradient(#9fbfe9, #89a9d8 16%, #7b9ccb 32%, #6286bd 58%, #557cb2 74%, #6690ce); }
.swoosh { position: absolute; left: 0; top: 0; }
.page { position: relative; width: 1192px; background: #fff; border: 1px solid #4c5f7c; border-width: 0 1px; box-shadow: 3px 0 5px #33507e; padding: 85px 169px 0 169px; color: #000; font: 24px/32px "Liberation Serif", serif; }
.page p { margin: 0; white-space: nowrap; }
.formula { margin-top: 27px; padding-left: 6px; height: 103px; display: flex; align-items: center; white-space: nowrap; }
.formula svg { margin: 0 1px 0 4px; }
.lhs { width: 34px; }
.cases { width: 244px; display: flex; flex-direction: column; align-items: flex-start; }
.cases div { display: flex; height: 36px; align-items: center; gap: 2px; }
.op { margin: 0 3px; }
.caret { position: relative; align-self: flex-end; width: 2px; height: 21px; margin-bottom: -5px; background: #000; }
.caret button { position: absolute; left: 2px; top: 25px; width: 20px; height: 20px; border: 1px solid #e6cf95; background: #fdfaf0; }

.scroll { grid-area: 1 / 3 / 3 / 4; display: flex; flex-direction: column; align-items: center; background: #a9c6ef; border-left: 1px solid #a6c8f2; padding-top: 3px; }
.scroll button { height: 17px; width: 16px; }
.split { width: 9px; height: 2px; margin-bottom: 3px; background: #31486c; }
.scroll .rulerbtn { height: 16px; border: 1px solid #8c96ab; background: #d2dae8; }
.track { flex: 1; width: 16px; display: flex; flex-direction: column; align-items: center; background: #7596c6; }
.track .arr { width: 9px; height: 5px; margin: 7px 0; background: #3e5a86; }
.thumb { width: 14px; margin-top: 18px; flex: 377; border: 1px solid #5a7399; border-radius: 2px; display: flex; align-items: center; justify-content: center; background: linear-gradient(90deg, #e9eff7, #dbe5f0 45%, #b5c5da 70%, #cbd8e8); }
.thumb i { width: 8px; height: 7px; background: repeating-linear-gradient(#6c7f99 0 1px, transparent 1px 2px); }
.rest { flex: 386; display: flex; align-items: flex-end; }

.status { flex: none; height: 23px; border-top: 1px solid #5f7ea8; display: flex; background: linear-gradient(#e3eefb, #cbdff8 30%, #b2cff3 34%, #d6e3f8); color: #152b63; }
.status > span { line-height: 20px; padding: 0 8px 0 9px; border-right: 1px solid #97b5dc; box-shadow: 1px 0 #f2f7fd; white-space: nowrap; }
.status > .lang { display: flex; align-items: center; gap: 16px; }
.view { margin-left: auto; width: 282px; padding: 0 6px; display: flex; align-items: center; border-left: 1px solid #7f9fcb; background: linear-gradient(#d3e3fa, #a9c8f2 40%, #85ade4 50%, #b1cdf3); }
.modes { display: flex; width: 92px; height: 18px; border: 1px solid #8aa9d4; border-radius: 2px; background: #d3e2f5; }
.modes button { flex: 1; border-right: 1px solid #b5cbe7; }
.pct { margin: 0 8px; width: 28px; white-space: nowrap; }
.round { width: 16px; height: 16px; flex: none; border: 2px solid #5f7494; border-radius: 50%; background: #f0f4fa; font-weight: 700; line-height: 12px; color: #444; }
.view input { appearance: none; flex: 1; min-width: 0; margin: 0; height: 16px; background: linear-gradient(#e8f1fc, #e8f1fc) center / 100% 2px no-repeat; }
.view input::-webkit-slider-thumb { appearance: none; width: 10px; height: 14px; background: linear-gradient(90deg, #51688c 0 1px, #dbe6f5 1px 4px, #8fa3c0 4px 6px, #dbe6f5 6px 9px, #51688c 9px); clip-path: polygon(0 0, 100% 0, 100% 65%, 50% 100%, 0 65%); }

.taskbar { flex: none; height: 39px; display: flex; align-items: center; color: #fff; border-top: 1px solid #6c839f; box-shadow: 0 -1px #0c1826;
  background: radial-gradient(ellipse 60px 30px at 150px 20px, #3f6190, transparent), radial-gradient(ellipse 120px 30px at 1370px 30px, #3e6899, transparent), linear-gradient(90deg, #1d3350, #2d4a72 100px, #1e375a 330px, #27456f 600px, #26446c 1000px, #2a4a78 1290px, #1b365a 1460px, #2d4f79 1600px, #1a3250 1740px, #132438); }
.start { width: 46px; padding-left: 8px; }
.grip { width: 10px; height: 30px; margin-left: 11px; background: radial-gradient(circle, #9fb2c8 1px, transparent 1px) 0 0 / 3px 4px; }
.apps { display: flex; margin-left: 7px; }
.apps button { position: relative; width: 58px; height: 38px; margin: 0 2px; border: 1px solid transparent; border-radius: 3px; }
.apps svg { margin-bottom: 2px; }
.apps .run { border-color: #b9c6d6; box-shadow: 0 0 0 1px #14253a; background: linear-gradient(135deg, #9aabbf, #4d6787 40%, #3c5678); }
.apps .active { background: linear-gradient(135deg, #d3dae3, #93a5bb 60%, #8598b1); }
.apps .stack { width: 52px; margin-right: 8px; box-shadow: 5px 0 0 -1px #5f7795, 5px 0 0 0 #b5c3d4; }
.tray { margin-left: auto; display: flex; align-items: center; gap: 7px; height: 100%; }
.tray .grip { margin: 0 2px 0 0; }
.ru { font-size: 11px; }
.q { width: 15px; height: 15px; margin-right: 7px; border: 1px solid #c9d3f2; border-radius: 50%; background: #1c1c9c; text-align: center; font-weight: 700; line-height: 13px; }
.tray svg { margin-right: 2px; }
.tray time { width: 64px; text-align: center; line-height: 17px; }
.desk { width: 13px; height: 38px; border: 1px solid #8093aa; background: linear-gradient(135deg, #71859c, #2a3d55); }
```

FILE: rulers.js
```js
const NS = "http://www.w3.org/2000/svg";
const CM = 56.7;
function add(svg, tag, attrs, text) {
  const el = document.createElementNS(NS, tag);
  for (const k in attrs) el.setAttribute(k, attrs[k]);
  if (text !== undefined) el.textContent = text;
  svg.appendChild(el);
}
const textStyle = { "font-size": 10, "font-family": "Noto Sans", fill: "#4a5566", "text-anchor": "middle" };

// Horizontal ruler: 21 cm page, left indent at 3 cm, right indent at 19.5 cm.
const h = document.getElementById("hruler");
const zero = 3 * CM;
const end = zero + 16.5 * CM;
add(h, "rect", { x: 0, y: 6, width: 1191, height: 12, fill: "#aec7ea", stroke: "#d3e2f6" });
add(h, "rect", { x: zero, y: 6, width: end - zero, height: 13, fill: "#fff" });
for (let q = 0; q < 84; q++) {
  const x = Math.round(q * CM / 4);
  const n = Math.abs(q / 4 - 3);
  if (q % 4 === 0) { if (n) add(h, "text", { x, y: 16, ...textStyle }, n); }
  else add(h, "rect", { x, y: q % 2 ? 12 : 10, width: 1, height: q % 2 ? 2 : 5, fill: "#4a5566" });
}
for (let t = 1; t * 70.9 < end - zero; t++)
  add(h, "rect", { x: Math.round(zero + t * 70.9), y: 20, width: 1, height: 3, fill: "#5f7694" });
const mark = { fill: "#e9f0fa", stroke: "#5d7190" };
add(h, "path", { d: "M165.500 3.500h9v3l-4 4-5-4z", ...mark });
add(h, "path", { d: "M165.500 17.500v-3l5-4 4 4v9h-9v-6h9", ...mark });
add(h, "path", { d: `M${end - 4} 18.500v-3l4-4 4 4v3z`, ...mark });

// Vertical ruler: zero of the text area is 89px below the top of the view.
const v = document.getElementById("vruler");
add(v, "rect", { x: 5, y: -2, width: 14, height: 900, fill: "#aec7ea", stroke: "#d3e2f6" });
add(v, "rect", { x: 6, y: 89, width: 12, height: 800, fill: "#fff" });
for (let q = -6; q < 60; q++) {
  const y = Math.round(89 + q * CM / 4);
  if (q === 0) continue;
  if (q % 4 === 0) add(v, "text", { transform: `translate(16 ${y}) rotate(-90)`, ...textStyle }, Math.abs(q / 4));
  else add(v, "rect", { x: q % 2 ? 11 : 10, y, width: q % 2 ? 2 : 5, height: 1, fill: "#4a5566" });
}
```
